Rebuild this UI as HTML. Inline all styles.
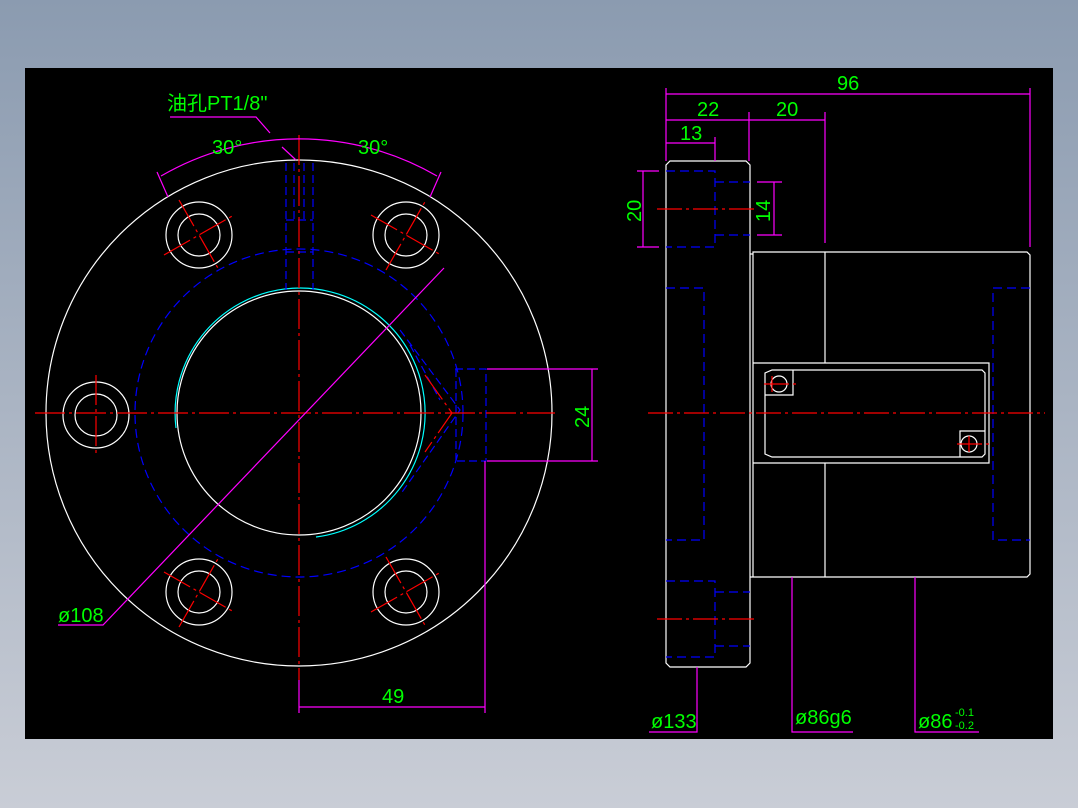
<!DOCTYPE html>
<html><head><style>
html,body{margin:0;padding:0;width:1078px;height:808px;overflow:hidden;background:linear-gradient(#8b9bb0,#c9cdd6);}
svg{position:absolute;left:0;top:0}
text{font-family:"Liberation Sans","Noto Sans CJK SC",sans-serif;fill:#00ff00;font-size:20px}
</style></head><body>
<svg width="1078" height="808" viewBox="0 0 1078 808">
<rect x="25" y="68" width="1028" height="671" fill="#000"/>
<g fill="none" stroke-width="1.2">
<!-- LEFT VIEW -->
<g stroke="#fff">
<circle cx="299" cy="413" r="253"/>
<circle cx="299" cy="413" r="122"/>
<circle cx="199" cy="235" r="33"/><circle cx="199" cy="235" r="21"/>
<circle cx="406" cy="235" r="33"/><circle cx="406" cy="235" r="21"/>
<circle cx="96" cy="415" r="33"/><circle cx="96" cy="415" r="21"/>
<circle cx="199" cy="592" r="33"/><circle cx="199" cy="592" r="21"/>
<circle cx="406" cy="592" r="33"/><circle cx="406" cy="592" r="21"/>
</g>
<path d="M176,428 A125,125 0 1 1 316,537" stroke="#0ff"/>
<circle cx="299" cy="413" r="164" stroke="#00f" stroke-dasharray="9,5"/>
<g stroke="#00f" stroke-dasharray="8,4">
<path d="M286,163V290 M294,163V220 M304,163V220 M313,163V290 M286,220H313 M286,252H313"/>
<path d="M455,369H486V461H455 M456,369V461"/>
<path d="M400,330 L460,410 L400,495 M410,345 L440,400"/>
</g>
<g stroke="#f00" stroke-dasharray="30,4,3,4">
<path d="M35,413H555 M299,135V680"/>
<path d="M179,200L219,270 M164,255L234,215 M386,270L426,200 M371,215L441,255"/>
<path d="M96,375V455 M179,627L219,557 M164,572L234,612 M386,557L426,627 M371,612L441,572"/>
<path d="M425,375L452,413L425,452"/>
</g>
<g stroke="#f0f">
<path d="M444,268L103,625H58"/>
<path d="M161,176 A275,275 0 0 1 437,176"/>
<path d="M157,172L168,197 M441,172L430,197"/>
<path d="M170,117H256L270,133 M282,147L296,160"/>
<path d="M487,369H598 M487,461H598 M592,369V461"/>
<path d="M299,680V713 M485,461V713 M299,707H485"/>
</g>
<!-- RIGHT VIEW -->
<g stroke="#fff">
<path d="M670,161H746L750,165V663L746,667H670L666,663V165Z"/>
<path d="M750,254H753V577H750 M753,252H1027L1030,255V574L1027,577H753Z"/>
<path d="M825,252V363 M825,463V577 M753,363H989V463H753"/>
<path d="M772,370H982L985,373V454L982,457H772L765,454V373Z"/>
<circle cx="779" cy="384" r="8"/><path d="M765,395H793V370"/>
<circle cx="969" cy="444" r="8"/><path d="M985,431H960V457"/>
</g>
<g stroke="#00f" stroke-dasharray="9,5">
<path d="M666,171H715V247H666 M715,182H750 M715,235H750"/>
<path d="M666,581H715V657H666 M715,592H750 M715,646H750"/>
<path d="M666,288H704V540H666 M1030,288H993V540H1030"/>
</g>
<g stroke="#f00" stroke-dasharray="25,4,3,4">
<path d="M657,209H757 M657,619H757 M648,413H1045"/>
<path d="M772,376V392 M764,384H796 M969,436V452 M957,444H990"/>
</g>
<g stroke="#f0f">
<path d="M666,88V161 M1030,88V247 M666,94H1030"/>
<path d="M749,112V161 M825,112V243 M666,120H825"/>
<path d="M715,137V161 M666,143H715"/>
<path d="M637,171H659 M637,247H659 M643,171V247"/>
<path d="M757,182H782 M757,235H782 M774,182V235"/>
<path d="M697,667V732H649 M792,577V732H853 M915,577V732H979"/>
</g>
</g>
<text x="167" y="110">油孔PT1/8"</text>
<text x="212" y="154">30°</text>
<text x="358" y="154">30°</text>
<text x="58" y="622">ø108</text>
<text x="382" y="703">49</text>
<text transform="translate(589,428) rotate(-90)">24</text>
<text x="837" y="90">96</text>
<text x="697" y="116">22</text>
<text x="776" y="116">20</text>
<text x="680" y="140" >13</text>
<text transform="translate(641,222) rotate(-90)">20</text>
<text transform="translate(770,222) rotate(-90)">14</text>
<text x="651" y="728">ø133</text>
<text x="795" y="724">ø86g6</text>
<text x="918" y="728">ø86</text>
<text x="955" y="716" style="font-size:11px">-0.1</text>
<text x="955" y="729" style="font-size:11px">-0.2</text>
</svg>
</body></html>
